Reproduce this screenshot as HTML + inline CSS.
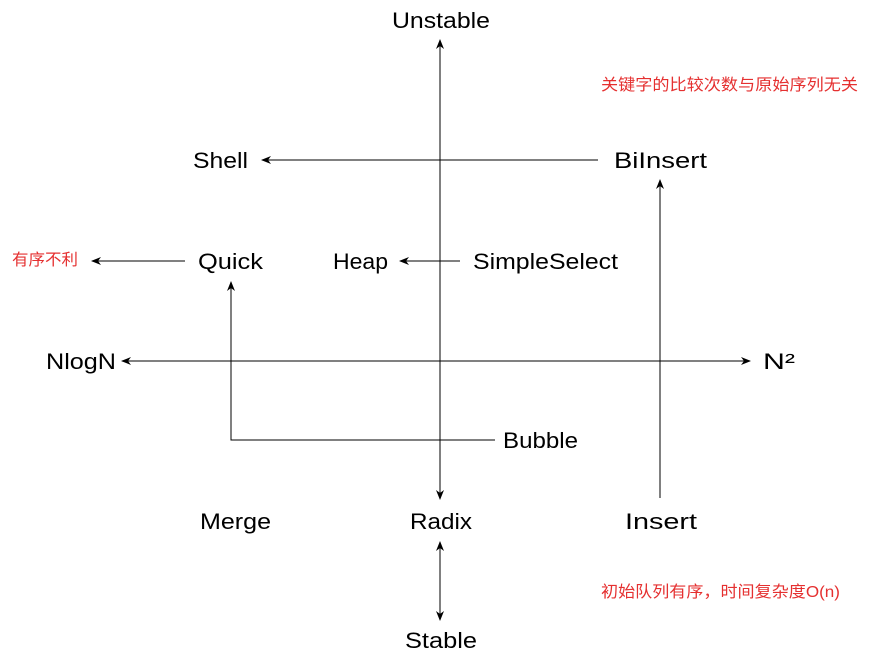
<!DOCTYPE html>
<html><head><meta charset="utf-8"><style>
html,body{margin:0;padding:0;background:#fff;width:870px;height:660px;overflow:hidden}
svg{display:block}
text{font-family:"Comic Sans MS","Liberation Sans",sans-serif;font-size:22px;fill:#000}
.r{font-family:"Liberation Sans","Noto Sans CJK SC",sans-serif;font-size:16px;fill:#e53030}
</style></head><body>
<svg width="870" height="660" viewBox="0 0 870 660">
<defs><marker id="a" markerWidth="10" markerHeight="8" refX="9" refY="4" orient="auto" markerUnits="userSpaceOnUse"><path d="M0,0 L10,4 L0,8 L3,4 z" fill="#000"/></marker></defs>
<g stroke="#000" stroke-width="1" fill="none">
<line x1="440" y1="270" x2="440" y2="40" marker-end="url(#a)"/>
<line x1="440" y1="270" x2="440" y2="499" marker-end="url(#a)"/>
<line x1="440" y1="361" x2="122" y2="361" marker-end="url(#a)"/>
<line x1="440" y1="361" x2="750" y2="361" marker-end="url(#a)"/>
<line x1="598" y1="160" x2="262" y2="160" marker-end="url(#a)"/>
<line x1="660" y1="498" x2="660" y2="180" marker-end="url(#a)"/>
<line x1="185" y1="261" x2="92" y2="261" marker-end="url(#a)"/>
<line x1="460" y1="261" x2="400" y2="261" marker-end="url(#a)"/>
<polyline points="495,440 231,440 231,282" marker-end="url(#a)"/>
<line x1="440" y1="580" x2="440" y2="542" marker-end="url(#a)"/>
<line x1="440" y1="580" x2="440" y2="620" marker-end="url(#a)"/>
</g>
<text x="392" y="28" textLength="98" lengthAdjust="spacingAndGlyphs">Unstable</text>
<text x="193" y="168" textLength="55" lengthAdjust="spacingAndGlyphs">Shell</text>
<text x="614" y="168" textLength="93" lengthAdjust="spacingAndGlyphs">BiInsert</text>
<text x="198" y="269" textLength="65" lengthAdjust="spacingAndGlyphs">Quick</text>
<text x="333" y="269" textLength="55" lengthAdjust="spacingAndGlyphs">Heap</text>
<text x="473" y="269" textLength="145" lengthAdjust="spacingAndGlyphs">SimpleSelect</text>
<text x="46" y="369" textLength="70" lengthAdjust="spacingAndGlyphs">NlogN</text>
<text x="763" y="369" textLength="32" lengthAdjust="spacingAndGlyphs">N²</text>
<text x="503" y="448" textLength="75" lengthAdjust="spacingAndGlyphs">Bubble</text>
<text x="200" y="529" textLength="71" lengthAdjust="spacingAndGlyphs">Merge</text>
<text x="410" y="529" textLength="62" lengthAdjust="spacingAndGlyphs">Radix</text>
<text x="625" y="529" textLength="72" lengthAdjust="spacingAndGlyphs">Insert</text>
<text x="405" y="648" textLength="72" lengthAdjust="spacingAndGlyphs">Stable</text>
<text class="r" x="601" y="90" textLength="257" lengthAdjust="spacingAndGlyphs">关键字的比较次数与原始序列无关</text>
<text class="r" x="12" y="265" textLength="66" lengthAdjust="spacingAndGlyphs">有序不利</text>
<text class="r" x="601" y="597" textLength="239" lengthAdjust="spacingAndGlyphs">初始队列有序，时间复杂度O(n)</text>
</svg>
</body></html>
